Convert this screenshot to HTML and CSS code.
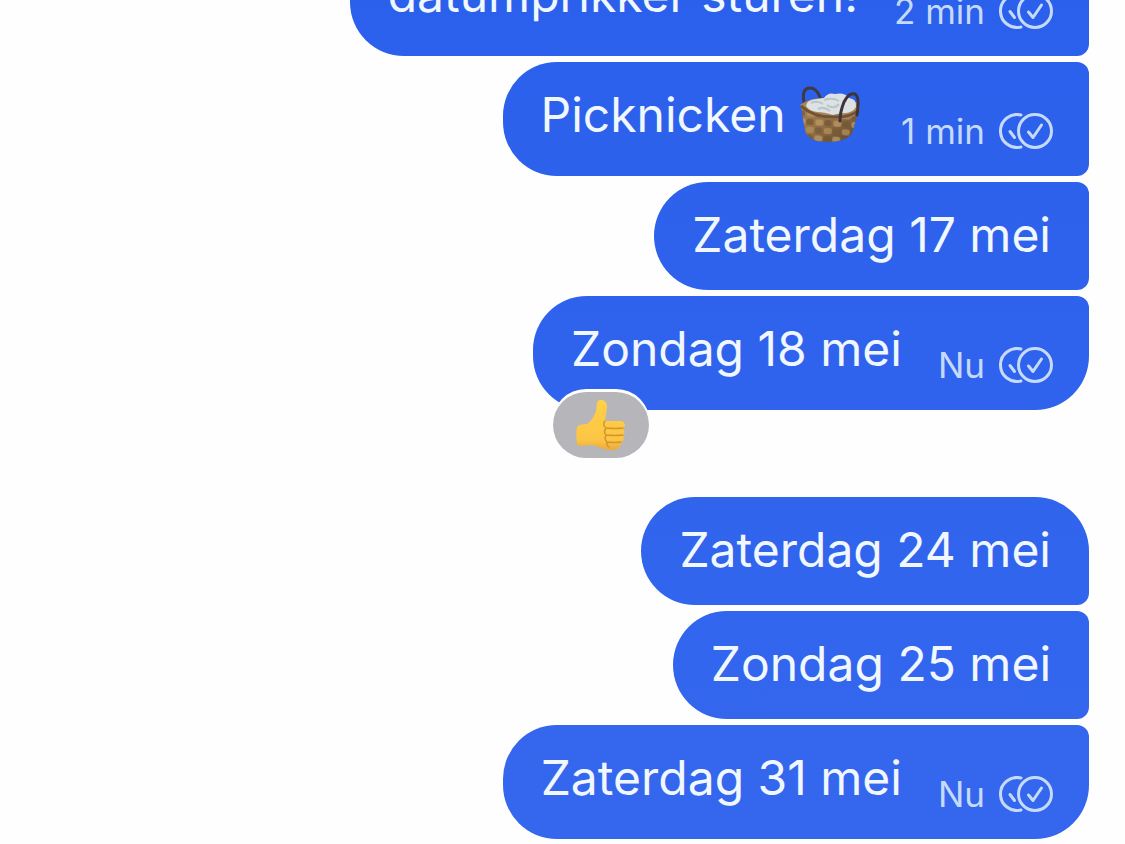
FILE: index.html
```
<!DOCTYPE html>
<html lang="nl">
<head>
  <meta charset="UTF-8">
  <meta name="viewport" content="width=device-width, initial-scale=1.0">
  <title>Chat</title>
  <link rel="stylesheet" href="styles.css">
</head>
<body>
  <!-- shared icons -->
  <svg class="sprite" aria-hidden="true">
    <symbol id="read" viewBox="0 0 54 36">
      <g fill="none" stroke="currentColor" stroke-width="3" stroke-linecap="round" stroke-linejoin="round">
        <path d="M22 2A16.5 16.5 0 1 0 22 34"/>
        <path d="M11 18.500L15.500 24.500"/>
        <circle cx="36" cy="18" r="16.500"/>
        <path d="M29.500 19L34 24.500L42.500 12"/>
      </g>
    </symbol>
  </svg>

  <main class="chat">
    <div class="group">
      <div class="message with-meta">
        <span class="text">datumprikker sturen!</span>
        <span class="meta"><time>2 min</time><svg class="read" role="img" aria-label="Gelezen"><use href="#read"/></svg></span>
      </div>
      <div class="message with-meta">
        <span class="text">Picknicken
          <svg class="basket" viewBox="0 0 62 60" role="img" aria-label="mand">
            <defs>
              <linearGradient id="wicker" x1="0" x2="1" y2="1">
                <stop offset="0" stop-color="#a8834f"/>
                <stop offset=".5" stop-color="#8f6d41"/>
                <stop offset="1" stop-color="#55402c"/>
              </linearGradient>
              <pattern id="weave" width="18" height="16" patternUnits="userSpaceOnUse" patternTransform="rotate(4)">
                <rect x="1" y="1" width="8" height="6" rx="2" fill="#bd9a66"/>
                <rect x="10" y="9" width="8" height="6" rx="2" fill="#b28f5b"/>
                <rect x="10" y="1" width="7" height="6" rx="2" fill="#73563a"/>
                <rect x="1" y="9" width="7" height="6" rx="2" fill="#765a3b"/>
              </pattern>
            </defs>
            <path d="M5 17C3 7 6 3 11 3C16 3 19 7 21 12" fill="none" stroke="#3f3a40" stroke-width="3" stroke-linecap="round"/>
            <path d="M2 20L6 46Q9 56 26 57Q44 58 53 49L59 27Z" fill="url(#wicker)"/>
            <path d="M2 22L6 46Q9 56 26 57Q44 58 53 49L59 27Q36 38 2 22Z" fill="url(#weave)" opacity=".75"/>
            <path d="M1 20Q10 13 24 13L57 17Q63 22 59 28Q52 36 34 34Q12 32 1 20Z" fill="#a78459"/>
            <path d="M2 21Q14 32 34 32Q51 33 60 25" fill="none" stroke="#6f5336" stroke-width="3"/>
            <path d="M7 21Q7 15 18 14L25 13Q29 7 36 9Q46 7 50 13Q58 14 57 22Q53 29 42 28L34 30Q25 27 18 27Q10 26 7 21Z" fill="#dce2e4"/>
            <path d="M12 18Q19 15 24 19M25 15Q34 12 40 16M28 20Q35 25 40 19M19 24Q25 21 31 26" fill="none" stroke="#b9c6ca" stroke-width="2"/>
            <path d="M41 36Q41 27 45 17Q50 7 56 9Q61 12 58 30" fill="none" stroke="#3e3338" stroke-width="3" stroke-linecap="round"/>
          </svg></span>
        <span class="meta"><time>1 min</time><svg class="read" role="img" aria-label="Gelezen"><use href="#read"/></svg></span>
      </div>
      <div class="message">
        <span class="text">Zaterdag 17 mei</span>
      </div>
      <div class="message with-meta last">
        <span class="text">Zondag 18 mei</span>
        <span class="meta"><time>Nu</time><svg class="read" role="img" aria-label="Gelezen"><use href="#read"/></svg></span>
        <button class="reaction" type="button" aria-label="Duim omhoog">
          <svg viewBox="0 0 52 54" aria-hidden="true">
            <defs>
              <linearGradient id="skin" x1="0" x2="0" y1="0" y2="1">
                <stop offset="0" stop-color="#ffd148"/>
                <stop offset=".8" stop-color="#fcc544"/>
                <stop offset="1" stop-color="#eba83a"/>
              </linearGradient>
            </defs>
            <path d="M2 29Q4 26 12 26Q18 22 21 13L22 4Q24 1 28 2Q32 4 32 9L30 23L46 23Q50 24 50 28Q49 30 48 31Q51 34 48 38Q50 41 47 44Q46 46 45 48Q42 53 36 52Q27 51 21 48Q14 46 8 48L3 48Q0 40 2 29Z" fill="url(#skin)"/>
            <path d="M30 23Q27 27 31 30Q28 34 31 37Q29 41 32 44Q31 47 34 49M31 30Q40 31 48 30M31 37Q40 38 48 37M32 44Q40 45 46 44" fill="none" stroke="#d3962c" stroke-width="1.500" stroke-linecap="round"/>
          </svg>
        </button>
      </div>
    </div>

    <div class="group">
      <div class="message first">
        <span class="text">Zaterdag 24 mei</span>
      </div>
      <div class="message">
        <span class="text">Zondag 25 mei</span>
      </div>
      <div class="message with-meta last">
        <span class="text">Zaterdag 31 mei</span>
        <span class="meta"><time>Nu</time><svg class="read" role="img" aria-label="Gelezen"><use href="#read"/></svg></span>
      </div>
    </div>
  </main>
</body>
</html>
```
FILE: styles.css
```
* {
  box-sizing: border-box;
}
body {
  margin: 0;
  background: #fefefe;
  color: #f0f7ff;
  font-family: Inter, "Liberation Sans", sans-serif;
}
.sprite {
  display: none;
}
/* scrolled to the newest message */
.chat {
  display: flex;
  flex-direction: column;
  justify-content: flex-end;
  gap: 87px;
  height: 100vh;
  padding: 0 36px 5px;
  overflow: hidden;
}
.group {
  display: flex;
  flex-direction: column;
  align-items: flex-end;
  gap: 6px;
}
.message {
  position: relative;
  display: flex;
  align-items: flex-end;
  gap: 36px;
  padding: 23px 38px 25px;
  border-radius: 54px 12px 12px 54px;
  background: linear-gradient(#2b60ec, #3567ee) fixed;
}
.with-meta {
  padding-right: 36px;
  padding-bottom: 27px;
}
.first {
  border-top-right-radius: 54px;
}
.last {
  border-bottom-right-radius: 54px;
}
.text {
  font-size: 48px;
  line-height: 60px;
  white-space: nowrap;
}
.with-meta .text {
  margin-bottom: 4px;
}
.basket {
  width: 62px;
  height: 60px;
  margin-right: 4px;
  vertical-align: top;
}
.meta {
  display: flex;
  align-items: center;
  gap: 14px;
  color: #c5dafc;
  font-size: 35px;
  line-height: 36px;
  white-space: nowrap;
}
.read {
  width: 54px;
  height: 36px;
}
.reaction {
  position: absolute;
  bottom: -48px;
  left: 20px;
  display: flex;
  align-items: center;
  justify-content: center;
  width: 96px;
  height: 66px;
  padding: 0;
  border: 0;
  border-radius: 33px;
  background: #b6b5b9;
  box-shadow: 0 -2px 0 1px #fefefe;
  cursor: pointer;
}
.reaction svg {
  width: 52px;
  height: 54px;
}
```
